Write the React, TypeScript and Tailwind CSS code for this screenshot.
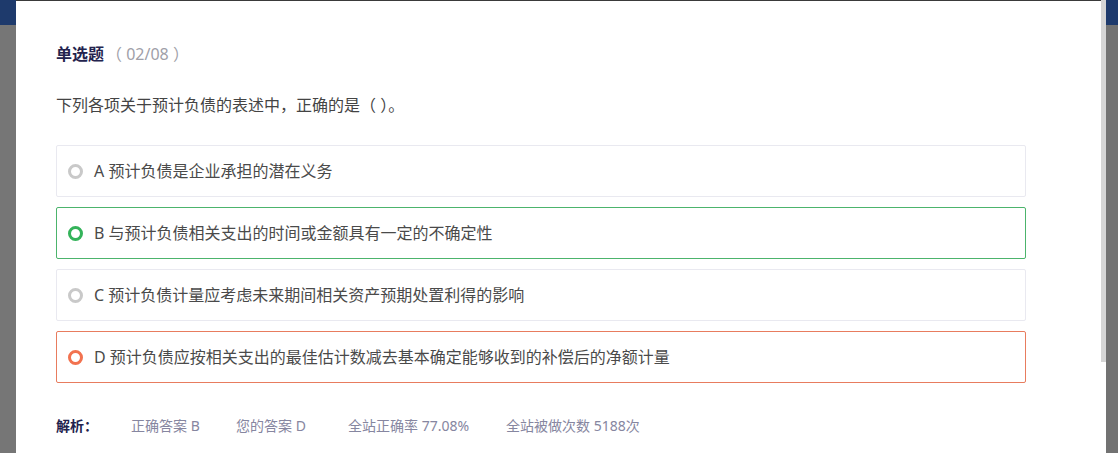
const options = [
  { key: 'A', text: '预计负债是企业承担的潜在义务', state: 'none' },
  { key: 'B', text: '与预计负债相关支出的时间或金额具有一定的不确定性', state: 'right' },
  { key: 'C', text: '预计负债计量应考虑未来期间相关资产预期处置利得的影响', state: 'none' },
  { key: 'D', text: '预计负债应按相关支出的最佳估计数减去基本确定能够收到的补偿后的净额计量', state: 'wrong' },
];

function Option({ k, text, state }: { k: string; text: string; state: string }) {
  const box =
    state === 'right'
      ? 'border-[#4cb46c]'
      : state === 'wrong'
        ? 'border-[#e87c5e]'
        : 'border-[#e9e9f0]';
  const ring =
    state === 'right'
      ? 'border-[#34b35a]'
      : state === 'wrong'
        ? 'border-[#f2724f]'
        : 'border-[#c9c9c9]';
  return (
    <div className={`flex h-[52px] w-[970px] items-center rounded-[2px] border pl-[11px] ${box}`}>
      <span className={`h-[15px] w-[15px] rounded-full border-[3.5px] ${ring}`} />
      <span className="ml-[11px] text-[16px] text-[#4a4a4a]">
        {k} {text}
      </span>
    </div>
  );
}

export default function App() {
  return (
    <div
      className="flex h-[453px] w-[1118px] overflow-hidden bg-white"
      style={{ fontFamily: '"Noto Sans", "Noto Sans CJK SC", sans-serif' }}
    >
      <div className="flex w-[16px] flex-col">
        <div className="h-[25px] bg-[#1e3a6c]" />
        <div className="flex-1 bg-[#767676]" />
      </div>

      <div className="flex-1 border-t border-[#3a3a3a] bg-white pl-[40px] pt-[41px]">
        <div className="flex h-6 items-center leading-6">
          <span className="text-[16px] font-bold text-[#23234e]">单选题</span>
          <span className="ml-[2px] text-[16px] text-[#a0a0a8]">（ 02/08 ）</span>
        </div>

        <p className="mt-[27px] text-[16px] leading-6 text-[#444]">
          下列各项关于预计负债的表述中，正确的是（ ）。
        </p>

        <div className="mt-[28px] flex flex-col gap-[10px]">
          {options.map((o) => (
            <Option key={o.key} k={o.key} text={o.text} state={o.state} />
          ))}
        </div>

        <div className="mt-[33px] flex h-5 items-center text-[14px] leading-5">
          <span className="w-[75px] font-bold text-[#23234e]">解析：</span>
          <span className="w-[105px] text-[#8686a0]">正确答案 B</span>
          <span className="w-[112px] text-[#8686a0]">您的答案 D</span>
          <span className="w-[158px] text-[#8686a0]">全站正确率 77.08%</span>
          <span className="text-[#8686a0]">全站被做次数 5188次</span>
        </div>
      </div>

      <div className="flex w-[5px] flex-col bg-white">
        <div className="h-[362px] bg-[#d5d5d5]" />
      </div>

      <div className="flex w-[12px] flex-col">
        <div className="h-[25px] bg-[#1e3a6c]" />
        <div className="flex-1 bg-[#727272]" />
      </div>
    </div>
  );
}
